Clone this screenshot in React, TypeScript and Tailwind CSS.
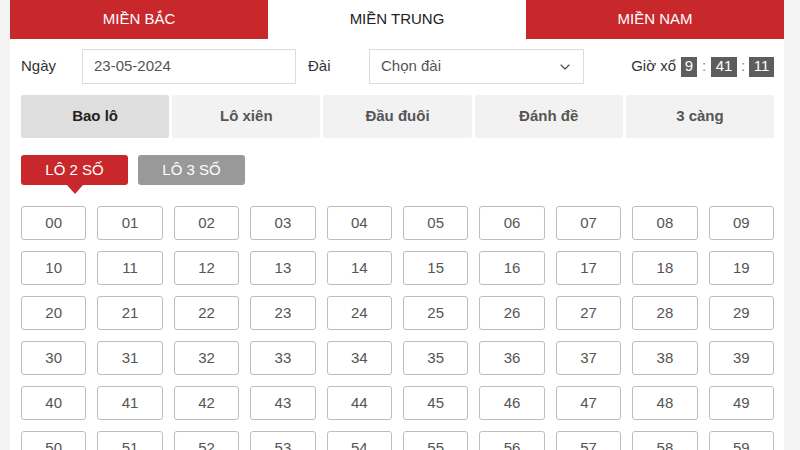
import { ChevronDown } from "lucide-react";

const regions = ["MIỀN BẮC", "MIỀN TRUNG", "MIỀN NAM"];
const games = ["Bao lô", "Lô xiên", "Đầu đuôi", "Đánh đề", "3 càng"];
const numbers = Array.from({ length: 60 }, (_, i) => String(i).padStart(2, "0"));

export default function App() {
  return (
    <div
      className="h-[450px] overflow-hidden bg-[#f4f4f4] pl-[10px] text-[#333]"
      style={{ fontFamily: '"Liberation Sans", Arial, sans-serif' }}
    >
      <div className="min-h-[450px] w-[774px] bg-white">
        {/* Region tabs */}
        <div className="grid h-[39px] grid-cols-3">
          {regions.map((r, i) => (
            <div
              key={r}
              className={
                i === 1
                  ? "flex items-center justify-center bg-white text-[15px] text-[#222]"
                  : "flex items-center justify-center bg-[#c8282b] text-[15px] text-white"
              }
            >
              {r}
            </div>
          ))}
        </div>

        {/* Filters */}
        <div className="flex items-center pl-[11px] pr-[10px] pt-[10px]">
          <span className="w-[61px] text-[15px] text-[#333]">Ngày</span>
          <div className="flex h-[35px] w-[214px] items-center border border-[#dcdcdc] px-[11px] text-[15px] text-[#555]">
            23-05-2024
          </div>
          <span className="ml-[12px] w-[61px] text-[15px] text-[#333]">Đài</span>
          <div className="flex h-[35px] w-[215px] items-center justify-between border border-[#dcdcdc] pl-[11px] pr-[10px] text-[15px] text-[#555]">
            <span>Chọn đài</span>
            <ChevronDown className="h-4 w-4 text-[#444]" strokeWidth={1.6} />
          </div>
          <div className="ml-auto flex items-center text-[15px] text-[#333]">
            <span className="mr-[5px]">Giờ xổ</span>
            <span className="flex h-[20px] w-[16px] items-center justify-center bg-[#5d5d5d] text-white">9</span>
            <span className="w-[14px] text-center text-[#888]">:</span>
            <span className="flex h-[20px] w-[26px] items-center justify-center bg-[#5d5d5d] text-white">41</span>
            <span className="w-[12px] text-center text-[#888]">:</span>
            <span className="flex h-[20px] w-[25px] items-center justify-center bg-[#5d5d5d] text-white">11</span>
          </div>
        </div>

        {/* Game tabs */}
        <div className="mt-[11px] grid grid-cols-5 gap-[3px] pl-[11px] pr-[10px]">
          {games.map((g, i) => (
            <div
              key={g}
              className={
                i === 0
                  ? "flex h-[43px] items-center justify-center rounded-[2px] bg-[#dedede] text-[15px] font-bold text-[#222]"
                  : "flex h-[43px] items-center justify-center rounded-[2px] bg-[#f2f2f2] text-[15px] font-bold text-[#555]"
              }
            >
              {g}
            </div>
          ))}
        </div>

        {/* Lô type */}
        <div className="mt-[17px] flex gap-[10px] px-[11px]">
          <div className="relative flex h-[30px] w-[107px] items-center justify-center rounded-[3px] bg-[#c8282b] text-[15px] text-white">
            LÔ 2 SỐ
            <span className="absolute left-1/2 top-full -translate-x-1/2 border-x-[8px] border-t-[9px] border-x-transparent border-t-[#c8282b]" />
          </div>
          <div className="flex h-[30px] w-[107px] items-center justify-center rounded-[3px] bg-[#999999] text-[15px] text-white">
            LÔ 3 SỐ
          </div>
        </div>

        {/* Number grid */}
        <div className="mt-[21px] grid grid-cols-10 gap-[11px] pl-[11px] pr-[10px]">
          {numbers.map((n) => (
            <div
              key={n}
              className="flex h-[34px] items-center justify-center rounded-[3px] border border-[#bdbdbd] text-[15px] text-[#555]"
            >
              {n}
            </div>
          ))}
        </div>
      </div>
    </div>
  );
}
